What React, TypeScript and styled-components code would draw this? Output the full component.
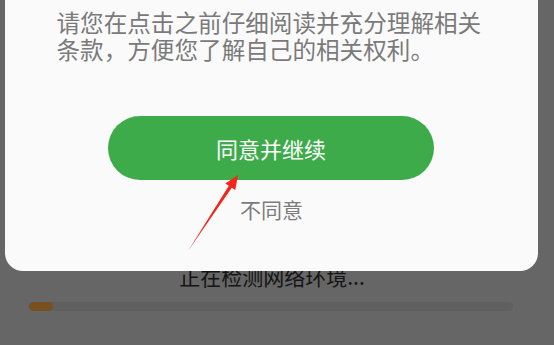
import styled, { createGlobalStyle } from "styled-components"

const GlobalStyle = createGlobalStyle`
    html, body {
        margin: 0;
        padding: 0;
        background: #666666;
    }
    body {
        font-family: "Noto Sans CJK SC", "Noto Sans", sans-serif;
    }
`

export default function App() {
    return (
        <Screen>
            <GlobalStyle />
            <LoadingArea>
                <LoadingText>正在检测网络环境...</LoadingText>
                <ProgressTrack>
                    <ProgressFill style={{ width: "5%" }} />
                </ProgressTrack>
            </LoadingArea>

            <Dialog>
                <Notice>
                    请您在点击之前仔细阅读并充分理解相关条款，方便您了解自己的相关权利。
                </Notice>
                <AgreeButton>同意并继续</AgreeButton>
                <DisagreeLink>不同意</DisagreeLink>
            </Dialog>

            <Annotation viewBox="0 0 554 345">
                <polygon
                    points="188,251 228.8,185.7 225.3,183.4 238,175 235.3,190 231.8,187.7"
                    fill="#f2261c"
                />
            </Annotation>
        </Screen>
    )
}

const Screen = styled.div`
    position: relative;
    width: 554px;
    height: 345px;
    overflow: hidden;
    background: #666666;
`

const LoadingArea = styled.div`
    padding: 263px 41px 0 29px;
    display: flex;
    flex-direction: column;
    align-items: center;
`

const LoadingText = styled.div`
    font-size: 21px;
    line-height: 26px;
    color: #141414;
    margin-left: 2px;
`

const ProgressTrack = styled.div`
    align-self: stretch;
    height: 9px;
    margin-top: 13px;
    border-radius: 5px;
    background: #5f5f5f;
    overflow: hidden;
`

const ProgressFill = styled.div`
    height: 100%;
    border-radius: 5px;
    background: #7a4f1f;
`

const Dialog = styled.div`
    position: absolute;
    left: 5px;
    top: -20px;
    width: 533px;
    height: 291px;
    box-sizing: border-box;
    padding-top: 29px;
    background: #fafafa;
    border-radius: 18px;
    display: flex;
    flex-direction: column;
    align-items: center;
`

const Notice = styled.p`
    margin: 0;
    width: 438px;
    padding-left: 8px;
    font-size: 23.6px;
    line-height: 27px;
    color: #7a7a7a;
`

const AgreeButton = styled.button`
    margin-top: 53px;
    width: 326px;
    height: 64px;
    border: none;
    border-radius: 32px;
    background: #3eab4a;
    color: #ffffff;
    font-family: inherit;
    font-size: 22px;
    margin-left: -1px;
`

const DisagreeLink = styled.div`
    margin-top: 15px;
    font-size: 21px;
    line-height: 28px;
    color: #7c7c7c;
`

const Annotation = styled.svg`
    position: absolute;
    left: 0;
    top: 0;
    width: 554px;
    height: 345px;
    pointer-events: none;
`
